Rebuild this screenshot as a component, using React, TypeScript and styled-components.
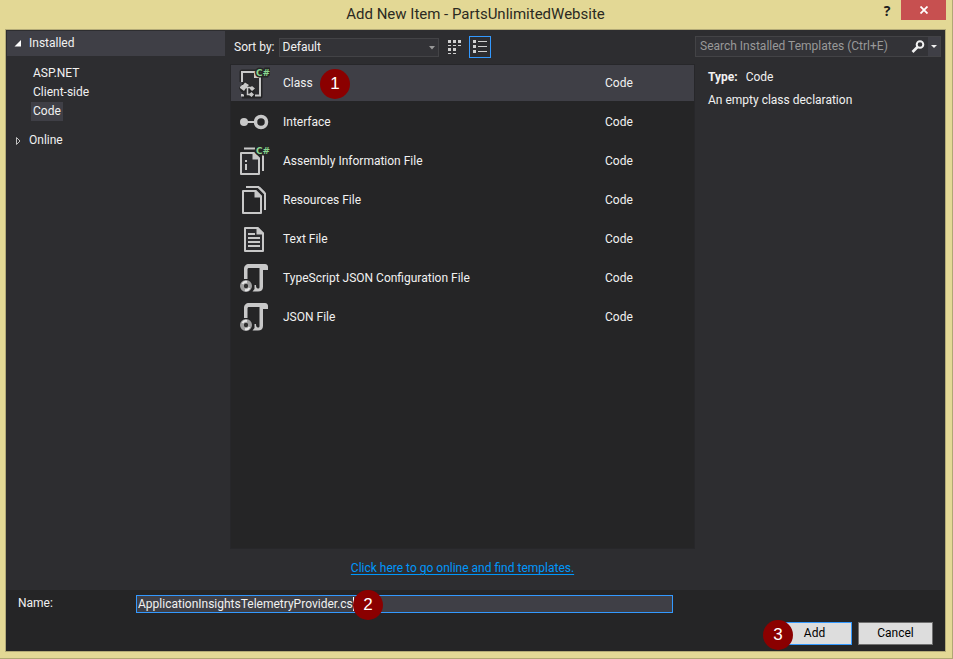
import React, { useState } from "react";
import styled, { createGlobalStyle } from "styled-components";

const GlobalStyle = createGlobalStyle`
  *, *::before, *::after { box-sizing: border-box; }
  body { margin: 0; }
  body, button, input, select {
    font-family: Roboto, "Noto Sans", sans-serif;
    font-size: 12px;
    line-height: 19px;
  }
  button, input, select { margin: 0; }
`;

const Window = styled.div`
  display: flex;
  flex-direction: column;
  min-height: 100vh;
  padding: 0 6px 6px 5px;
  background: #e3d895;
  border-right: 1px solid #b0a774;
  border-bottom: 1px solid #b0a774;
`;

const TitleBar = styled.header`
  display: grid;
  grid-template-columns: 1fr auto 1fr;
  height: 29px;
`;

const Title = styled.h1`
  grid-column: 2;
  margin: 0;
  font-size: 15px;
  font-weight: 400;
  line-height: 29px;
  color: #2b2a22;
`;

const WindowControls = styled.div`
  display: flex;
  justify-content: flex-end;
  align-items: flex-start;
`;

const HelpButton = styled.button`
  width: 28px;
  height: 20px;
  padding: 0;
  border: 0;
  background: none;
  color: #1e1e1e;
  font-family: "Open Sans", sans-serif;
  font-size: 14px;
  font-weight: 700;
`;

const CloseButton = styled.button`
  display: grid;
  place-items: center;
  width: 45px;
  height: 20px;
  padding: 0;
  border: 0;
  background: #c75050;
`;

const Client = styled.main`
  display: flex;
  flex: 1;
  flex-direction: column;
  border: 1px solid #b3aa77;
  background: #2d2d30;
  color: #f1f1f1;
`;

const Panels = styled.div`
  display: grid;
  flex: 1;
  grid-template-columns: 224px minmax(0, 1fr) 250px;
`;

const Sidebar = styled.nav`
  padding: 1px 5px 0 1px;
`;

const GroupHeader = styled.button<{ $active?: boolean }>`
  display: flex;
  align-items: center;
  gap: 8px;
  width: 100%;
  height: ${(p) => (p.$active ? 25 : 19)}px;
  padding: 0 7px;
  border: 0;
  background: ${(p) => (p.$active ? "#3f3f46" : "none")};
  color: inherit;
  text-align: left;
`;

const SubList = styled.ul`
  display: flex;
  flex-direction: column;
  align-items: flex-start;
  margin: 8px 0 10px 24px;
  padding: 0;
  list-style: none;
`;

const SubItem = styled.button<{ $selected?: boolean }>`
  display: block;
  height: 19px;
  padding: 0 2px;
  border: 0;
  background: ${(p) => (p.$selected ? "#3f3f46" : "none")};
  color: inherit;
`;

const Center = styled.section`
  display: flex;
  flex-direction: column;
`;

const Toolbar = styled.div`
  display: flex;
  align-items: center;
  height: 34px;
  padding: 0 4px;
`;

const SortLabel = styled.label`
  display: flex;
  align-items: center;
  gap: 4px;
`;

const SelectWrap = styled.span`
  position: relative;
  display: block;
`;

const SortSelect = styled.select`
  display: block;
  width: 160px;
  height: 19px;
  padding: 0 3px;
  appearance: none;
  border: 1px solid #434346;
  border-radius: 0;
  background: #333337;
  color: #f1f1f1;
  line-height: 17px;
`;

const SelectArrow = styled.svg`
  position: absolute;
  top: 8px;
  right: 4px;
  pointer-events: none;
`;

const ViewButton = styled.button<{ $pressed?: boolean }>`
  display: grid;
  place-items: center;
  width: 22px;
  height: 22px;
  margin-left: ${(p) => (p.$pressed ? 3 : 5)}px;
  padding: 0;
  border: 1px solid ${(p) => (p.$pressed ? "#3399ff" : "transparent")};
  background: none;
`;

const TemplateList = styled.ul`
  display: flex;
  flex: 1;
  flex-direction: column;
  gap: 3px;
  margin: 0;
  padding: 0;
  border: 1px solid #27272a;
  background: #252526;
  list-style: none;
`;

const TemplateRow = styled.li<{ $selected?: boolean }>`
  display: grid;
  grid-template-columns: 52px minmax(0, 1fr) 89px;
  align-items: center;
  height: 36px;
  background: ${(p) => (p.$selected ? "#3f3f46" : "none")};
  cursor: default;
`;

const TemplateIcon = styled.svg`
  display: block;
  margin-left: 7px;
`;

const TemplateName = styled.span`
  position: relative;
  justify-self: start;
`;

const OnlineRow = styled.div`
  padding: 10px 0 12px;
  text-align: center;
`;

const OnlineLink = styled.a`
  color: #0097fb;
  text-decoration: underline;
  text-underline-offset: 2px;
`;

const Details = styled.aside`
  padding: 6px 4px 0 0;
`;

const SearchBox = styled.div`
  display: flex;
  height: 21px;
  border: 1px solid #434346;
  background: #333337;
`;

const SearchInput = styled.input`
  flex: 1;
  min-width: 0;
  padding: 0 4px;
  border: 0;
  outline: 0;
  background: none;
  color: #f1f1f1;
  &::placeholder { color: #999999; opacity: 1; }
`;

const SearchButton = styled.button<{ $drop?: boolean }>`
  display: grid;
  place-items: center;
  width: ${(p) => (p.$drop ? 12 : 20)}px;
  padding: 0;
  border: 0;
  background: ${(p) => (p.$drop ? "#3f3f46" : "none")};
`;

const Facts = styled.div`
  padding: 11px 13px 0;
`;

const TypeLine = styled.dl`
  display: flex;
  gap: 8px;
  margin: 0;
  dt { font-weight: 700; }
  dd { margin: 0; }
`;

const Description = styled.p`
  margin: 4px 0 0;
`;

const Footer = styled.footer`
  display: flex;
  flex-direction: column;
  gap: 10px;
  padding: 4px 12px 6px;
  background: #252526;
`;

const NameRow = styled.div`
  display: grid;
  grid-template-columns: 118px minmax(0, 1fr) 260px;
  align-items: center;
  height: 18px;
`;

const NameField = styled.div`
  position: relative;
`;

const NameInput = styled.input`
  display: block;
  width: 100%;
  height: 18px;
  padding: 0 1px;
  border: 1px solid #3399ff;
  outline: 0;
  background: #3f3f46;
  color: #f1f1f1;
  line-height: 16px;
`;

const Caret = styled.span`
  position: absolute;
  top: 2px;
  left: 217px;
  width: 1px;
  height: 14px;
  background: #ffffff;
`;

const Actions = styled.div`
  display: flex;
  justify-content: flex-end;
  gap: 6px;
`;

const ActionWrap = styled.div`
  position: relative;
`;

const ActionButton = styled.button<{ $primary?: boolean }>`
  display: block;
  width: 75px;
  height: 23px;
  padding: 0;
  border: 1px solid ${(p) => (p.$primary ? "#3399ff" : "#707070")};
  background: #dddddd;
  color: #000000;
`;

const Marker = styled.span<{ $left: number }>`
  position: absolute;
  top: 50%;
  left: ${(p) => p.$left}px;
  width: 30px;
  height: 30px;
  margin-top: -14px;
  border-radius: 50%;
  background: #8b0000;
  color: #ffffff;
  font-family: "Liberation Sans", Arial, sans-serif;
  font-size: 17px;
  line-height: 30px;
  text-align: center;
`;

const GREY = "#c8c8c8";

const CSharp = () => (
  <text x="18" y="9" fontFamily="DejaVu Sans, sans-serif" fontSize="9" fontWeight="700" fill="#8ad88f" stroke="#252526" strokeWidth="3" paintOrder="stroke">
    C#
  </text>
);

const ClassIcon = () => (
  <>
    <path d="M4 15V5H18L22 9V29H4" fill="none" stroke="#252526" strokeWidth="5" strokeLinejoin="round" />
    <path d="M4 5H17L22 10V28H4Z" fill="#2b2b2e" />
    <path d="M4 15V5H17M22 11V28.500H17M4 27V28.500H6" fill="none" stroke={GREY} strokeWidth="2" />
    <path d="M16 4V11H23V9L18 4Z" fill={GREY} />
    <path d="M1 21L7 14L12 18L17 21L16 30H10L8 25H3Z" fill="#252526" />
    <path d="M2 20L4 18L5 18L7 15.500L11 18L8 21L6 24L2 21Z" fill={GREY} />
    <path d="M14 19L17 21.500L14 24L11.500 21.500ZM13.500 25L16 27.500L13.500 30L10.500 27.500Z" fill={GREY} />
    <path d="M7 20.500H14M9.500 20.500V27.500H13" fill="none" stroke={GREY} strokeWidth="1.500" />
    <CSharp />
  </>
);

const InterfaceIcon = () => (
  <>
    <circle cx="6" cy="16" r="4" fill={GREY} />
    <path d="M9 16H18" stroke={GREY} strokeWidth="2" />
    <circle cx="23" cy="16" r="5.500" fill="none" stroke={GREY} strokeWidth="3.500" />
  </>
);

const AssemblyIcon = () => (
  <>
    <path d="M6 3.500H17M25 10V26" fill="none" stroke={GREY} strokeWidth="2" />
    <path d="M3 8H15.500L21 13.500V29H3Z" fill="#2b2b2e" stroke={GREY} strokeWidth="2" strokeLinejoin="round" />
    <path d="M14.500 7V14.500H22V13L16 7Z" fill={GREY} />
    <path d="M7 15H9V17H7ZM7 19H9V25H7Z" fill={GREY} />
    <CSharp />
  </>
);

const ResourcesIcon = () => (
  <>
    <path d="M8 3H20.500L27 9.500V26" fill="none" stroke={GREY} strokeWidth="2" />
    <path d="M19 3L27 11V8L22 3Z" fill={GREY} />
    <path d="M5 7H17.500L23 12.500V29H5Z" fill="#252526" stroke={GREY} strokeWidth="2" strokeLinejoin="round" />
    <path d="M16.500 6V13.500H24V12L18 6Z" fill={GREY} />
  </>
);

const TextIcon = () => (
  <>
    <path d="M7 5H19.500L25 10.500V28H7Z" fill="#2b2b2e" stroke={GREY} strokeWidth="2" strokeLinejoin="round" />
    <path d="M18.500 4V11.500H26V10L20 4Z" fill={GREY} />
    <path d="M10 11H17M10 15H22M10 19H22M10 23H22" stroke={GREY} strokeWidth="2" />
  </>
);

const JsonIcon = () => (
  <>
    <path d="M6 17V7C6 4 8 2 11 2H27C29 2 30 3.500 30 5V8H25V25C25 28 23 29.500 20 29.500H14.500L16.500 27V23H18C18 25 18.500 26.500 20 26.500C21 26.500 21.500 26 21.500 25V6H11C10 6 9.500 6.500 9.500 7.500V17Z" fill={GREY} />
    <circle cx="8" cy="24" r="7" fill="#252526" />
    <circle cx="8" cy="24" r="4" fill="none" stroke="#a0a0a0" strokeWidth="4" />
    <path d="M4.500 22A4 4 0 0 1 9 20M11.500 26A4 4 0 0 1 7 28" fill="none" stroke="#e6e6e6" strokeWidth="2" />
    <circle cx="8" cy="24" r="2" fill="#303030" />
  </>
);

const templates = [
  { name: "Class", Icon: ClassIcon },
  { name: "Interface", Icon: InterfaceIcon },
  { name: "Assembly Information File", Icon: AssemblyIcon },
  { name: "Resources File", Icon: ResourcesIcon },
  { name: "Text File", Icon: TextIcon },
  { name: "TypeScript JSON Configuration File", Icon: JsonIcon },
  { name: "JSON File", Icon: JsonIcon },
];

const categories = ["ASP.NET", "Client-side", "Code"];

export default function App() {
  const [name, setName] = useState("ApplicationInsightsTelemetryProvider.cs");

  return (
    <>
      <GlobalStyle />
      <Window>
        <TitleBar>
          <Title>Add New Item - PartsUnlimitedWebsite</Title>
          <WindowControls>
            <HelpButton aria-label="Help">?</HelpButton>
            <CloseButton aria-label="Close">
              <svg width="8" height="8" viewBox="0 0 8 8">
                <path d="M0.500 0.500L7.500 7.500M7.500 0.500L0.500 7.500" stroke="#fff" strokeWidth="1.800" />
              </svg>
            </CloseButton>
          </WindowControls>
        </TitleBar>
        <Client>
          <Panels>
            <Sidebar aria-label="Template categories">
              <GroupHeader $active aria-expanded="true">
                <svg width="7" height="7" viewBox="0 0 7 7">
                  <path d="M7 0V6.500H0.500Z" fill="#fff" />
                </svg>
                Installed
              </GroupHeader>
              <SubList>
                {categories.map((c) => (
                  <li key={c}>
                    <SubItem $selected={c === "Code"}>{c}</SubItem>
                  </li>
                ))}
              </SubList>
              <GroupHeader aria-expanded="false">
                <svg width="7" height="8" viewBox="0 0 7 8">
                  <path d="M2.500 0.500V7.500L6 4Z" fill="none" stroke="#c0c0c0" />
                </svg>
                Online
              </GroupHeader>
            </Sidebar>
            <Center>
              <Toolbar>
                <SortLabel>
                  Sort by:
                  <SelectWrap>
                    <SortSelect defaultValue="Default">
                      <option>Default</option>
                    </SortSelect>
                    <SelectArrow width="6" height="4" viewBox="0 0 6 4">
                      <path d="M0 0H6L3 3.500Z" fill="#999" />
                    </SelectArrow>
                  </SelectWrap>
                </SortLabel>
                <ViewButton aria-label="Small icons">
                  <svg width="14" height="14" viewBox="0 0 14 14">
                    <path d="M0 0H3V3H0ZM5 0H8V3H5ZM10 0H13V3H10ZM0 5H3V6H0ZM5 5H8V6H5ZM10 5H13V6H10ZM0 8H3V11H0ZM5 8H8V11H5ZM0 13H3V14H0ZM5 13H8V14H5Z" fill="#d0d0d0" />
                  </svg>
                </ViewButton>
                <ViewButton $pressed aria-label="Medium icons" aria-pressed="true">
                  <svg width="14" height="14" viewBox="0 0 14 14">
                    <path d="M0 0H3V3H0ZM0 5H3V8H0ZM0 10H3V13H0ZM5 1H14V2H5ZM5 6H14V7H5ZM5 11H14V12H5Z" fill="#d0d0d0" />
                  </svg>
                </ViewButton>
              </Toolbar>
              <TemplateList>
                {templates.map(({ name: label, Icon }, i) => (
                  <TemplateRow key={label} $selected={i === 0}>
                    <TemplateIcon width="32" height="32" viewBox="0 0 32 32" aria-hidden="true">
                      <Icon />
                    </TemplateIcon>
                    <TemplateName>
                      {label}
                      {i === 0 && <Marker $left={37}>1</Marker>}
                    </TemplateName>
                    <span>Code</span>
                  </TemplateRow>
                ))}
              </TemplateList>
              <OnlineRow>
                <OnlineLink href="#online">Click here to go online and find templates.</OnlineLink>
              </OnlineRow>
            </Center>
            <Details>
              <SearchBox>
                <SearchInput aria-label="Search installed templates" placeholder="Search Installed Templates (Ctrl+E)" />
                <SearchButton aria-label="Search">
                  <svg width="14" height="13" viewBox="0 0 14 13">
                    <circle cx="9" cy="4.500" r="3.300" fill="none" stroke="#f1f1f1" strokeWidth="2" />
                    <path d="M6.500 7L1.500 12" stroke="#f1f1f1" strokeWidth="2.600" />
                  </svg>
                </SearchButton>
                <SearchButton $drop aria-label="Search options">
                  <svg width="6" height="3" viewBox="0 0 6 3">
                    <path d="M0 0H6L3 3Z" fill="#f1f1f1" />
                  </svg>
                </SearchButton>
              </SearchBox>
              <Facts>
                <TypeLine>
                  <dt>Type:</dt>
                  <dd>Code</dd>
                </TypeLine>
                <Description>An empty class declaration</Description>
              </Facts>
            </Details>
          </Panels>
          <Footer>
            <NameRow>
              <label htmlFor="item-name">Name:</label>
              <NameField>
                <NameInput id="item-name" value={name} onChange={(e) => setName(e.target.value)} />
                <Caret />
                <Marker $left={217}>2</Marker>
              </NameField>
            </NameRow>
            <Actions>
              <ActionWrap>
                <ActionButton $primary>Add</ActionButton>
                <Marker $left={-14}>3</Marker>
              </ActionWrap>
              <ActionButton>Cancel</ActionButton>
            </Actions>
          </Footer>
        </Client>
      </Window>
    </>
  );
}
